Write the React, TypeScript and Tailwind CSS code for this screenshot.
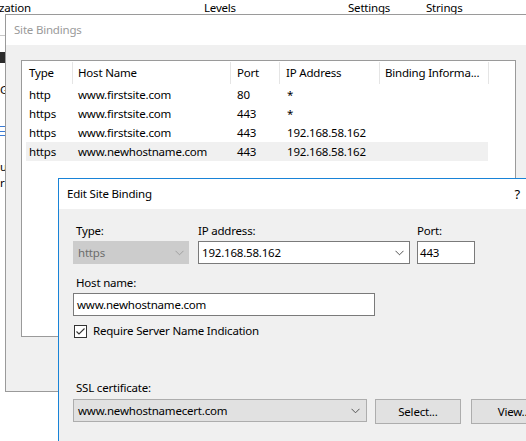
import React from 'react';

const font = { fontFamily: '"Noto Sans", "Open Sans", sans-serif' };

const Chevron: React.FC<{ color?: string }> = ({ color = '#555' }) => (
  <svg width="9" height="6" viewBox="0 0 9 6" className="shrink-0">
    <path d="M0.5 0.8 L4.5 4.8 L8.5 0.8" fill="none" stroke={color} strokeWidth="1" />
  </svg>
);

const rows = [
  { type: 'http', host: 'www.firstsite.com', port: '80', ip: '*' },
  { type: 'https', host: 'www.firstsite.com', port: '443', ip: '*' },
  { type: 'https', host: 'www.firstsite.com', port: '443', ip: '192.168.58.162' },
  { type: 'https', host: 'www.newhostname.com', port: '443', ip: '192.168.58.162' },
];

const SiteBindings: React.FC = () => {
  return (
    <div className="absolute left-[5px] top-[14px] w-[560px] h-[378px] border border-[#9a9a9a] bg-[#f0f0f0] flex flex-col">
      {/* title bar */}
      <div className="h-[30px] bg-white flex items-center pl-[8px] text-[#9a9a9a]">
        Site Bindings
      </div>

      {/* bindings list */}
      <div className="ml-[15px] mt-[15px] w-[495px] h-[277px] border border-[#9a9a9a] bg-white text-black">
        <div className="flex h-[24px] items-center pl-[6px]">
          <div className="w-[45px] pl-[1px] h-[22px] flex items-center border-r border-[#e5e5e5]">Type</div>
          <div className="w-[158px] pl-[5px] h-[22px] flex items-center border-r border-[#e5e5e5]">Host Name</div>
          <div className="w-[49px] pl-[6px] h-[22px] flex items-center border-r border-[#e5e5e5]">Port</div>
          <div className="w-[100px] pl-[6px] h-[22px] flex items-center border-r border-[#e5e5e5]">IP Address</div>
          <div className="w-[109px] pl-[5px] h-[22px] flex items-center border-r border-[#e5e5e5]">Binding Informa...</div>
        </div>
        {rows.map((r, i) => (
          <div
            key={i}
            className={
              i === 3
                ? 'flex h-[19px] items-center ml-[4px] w-[462px] bg-[#f0f0f0]'
                : 'flex h-[19px] items-center ml-[4px] w-[462px]'
            }
          >
            <div className="w-[47px] pl-[3px]">{r.type}</div>
            <div className="w-[158px] pl-[5px]">{r.host}</div>
            <div className="w-[50px] pl-[6px]">{r.port}</div>
            <div className="w-[100px] pl-[6px]">{r.ip}</div>
          </div>
        ))}
      </div>
    </div>
  );
};

const EditBinding: React.FC = () => {
  return (
    <div className="absolute left-[58px] top-[178px] w-[500px] h-[300px] border border-[#1883d7] bg-[#f0f0f0] flex flex-col text-black">
      <div className="h-[30px] bg-white flex items-center justify-between pl-[8px] pr-[37px]">
        <span>Edit Site Binding</span>
        <span className="text-[13px]">?</span>
      </div>

      <div className="flex flex-col pl-[14px] pt-[14px]">
        {/* type / ip / port */}
        <div className="flex gap-[9px] items-start">
          <div className="flex flex-col">
            <span className="pl-[3px] leading-[16px] mb-[2px]">Type:</span>
            <div className="w-[116px] h-[23px] bg-[#cccccc] border border-[#cccccc] flex items-center justify-between px-[4px]">
              <span className="text-[#6d6d6d]">https</span>
              <Chevron color="#a0a0a0" />
            </div>
          </div>
          <div className="flex flex-col">
            <span className="leading-[16px] mb-[2px]">IP address:</span>
            <div className="w-[212px] h-[23px] bg-white border border-[#7a7a7a] flex items-center justify-between pl-[3px] pr-[5px]">
              <span>192.168.58.162</span>
              <Chevron />
            </div>
          </div>
          <div className="flex flex-col -ml-[2px]">
            <span className="leading-[16px] mb-[2px]">Port:</span>
            <div className="w-[58px] h-[23px] bg-white border border-[#7a7a7a] flex items-center pl-[2px]">443</div>
          </div>
        </div>

        {/* host name */}
        <span className="pl-[3px] mt-[11px] leading-[16px] mb-[2px]">Host name:</span>
        <div className="w-[302px] h-[23px] bg-white border border-[#7a7a7a] flex items-center pl-[3px]">
          www.newhostname.com
        </div>

        <div className="flex items-center mt-[7px] pl-[1px] gap-[6px]">
          <div className="w-[13px] h-[13px] border border-[#333] bg-white flex items-center justify-center">
            <svg width="11" height="11" viewBox="0 0 11 11">
              <path d="M1.5 5.5 L4 8 L9.5 2.5" fill="none" stroke="#333" strokeWidth="1.1" />
            </svg>
          </div>
          <span>Require Server Name Indication</span>
        </div>

        {/* ssl */}
        <span className="pl-[3px] mt-[41px] leading-[16px] mb-[3px]">SSL certificate:</span>
        <div className="flex items-start gap-[8px]">
          <div className="w-[297px] h-[23px] bg-[#e1e1e1] border border-[#adadad] flex items-center justify-between pl-[4px] pr-[6px]">
            <span>www.newhostnamecert.com</span>
            <Chevron />
          </div>
          <div className="w-[87px] h-[25px] bg-[#e1e1e1] border border-[#adadad] flex items-center justify-center">
            Select...
          </div>
          <div className="w-[87px] h-[25px] ml-[2px] bg-[#e1e1e1] border border-[#adadad] flex items-center justify-center">
            View...
          </div>
        </div>
      </div>
    </div>
  );
};

const App: React.FC = () => {
  return (
    <div
      className="relative w-[526px] h-[441px] overflow-hidden bg-white text-[11.5px] leading-[16px] tracking-[-0.2px]"
      style={font}
    >
      {/* manager window behind */}
      <div className="flex h-[16px] items-center text-black">
        <span className="w-[205px] -ml-[1px]">zation</span>
        <span className="w-[144px]">Levels</span>
        <span className="w-[78px]">Settings</span>
        <span>Strings</span>
      </div>
      <div className="absolute left-0 top-[35px] w-[6px] h-[1px] bg-[#c8c8c8]" />
      <div className="absolute left-0 top-[52px] w-[6px] h-[11px] bg-[#2b2b2b]" />
      <div className="absolute left-0 top-[82px]">Gl</div>
      <div className="absolute left-0 top-[124px] w-[6px] h-[14px] flex flex-col justify-between py-[2px]">
        <div className="h-[1px] bg-[#3a7bd5]" />
        <div className="h-[1px] bg-[#3a7bd5]" />
        <div className="h-[1px] bg-[#3a7bd5]" />
      </div>
      <div className="absolute left-0 top-[159px]">ue</div>
      <div className="absolute left-0 top-[175px]">ri</div>

      <SiteBindings />
      <EditBinding />
    </div>
  );
};

export default App;
